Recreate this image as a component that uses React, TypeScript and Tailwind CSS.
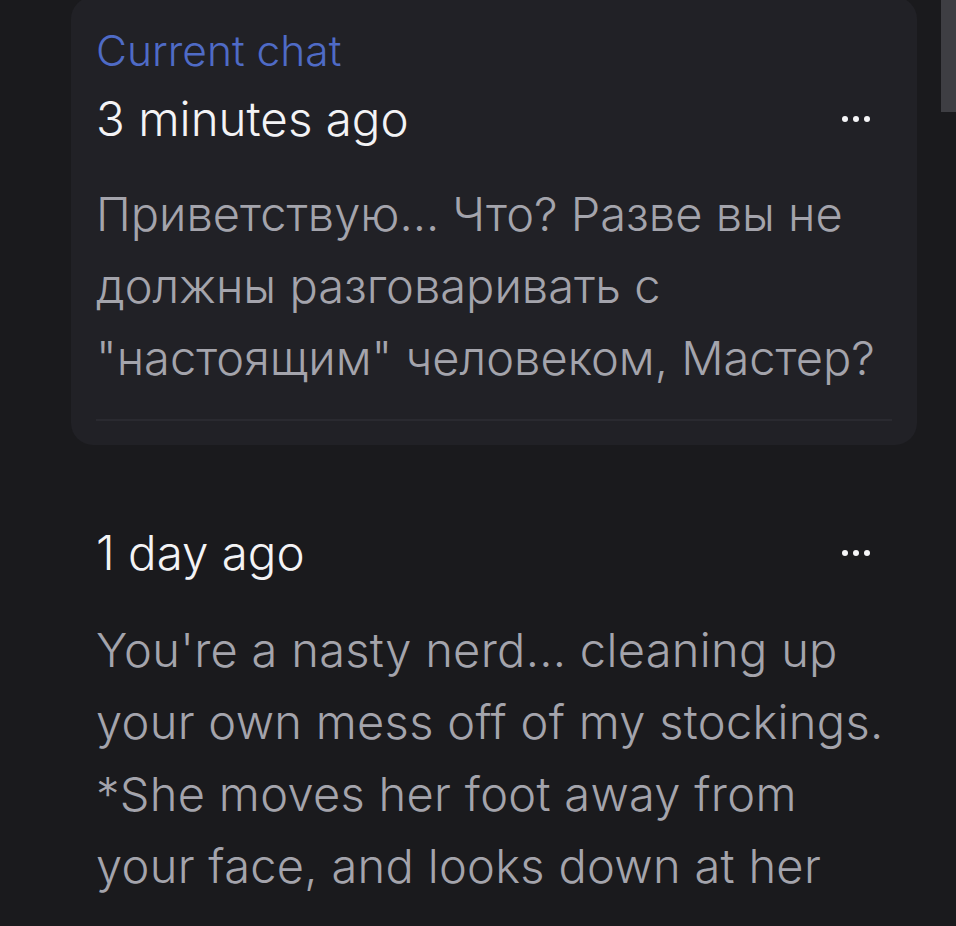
import React from "react";

function Dots() {
  return (
    <div className="flex items-center gap-[5px] mr-[22px]">
      <span className="block w-[6px] h-[6px] rounded-full bg-[#f5f5f7]" />
      <span className="block w-[6px] h-[6px] rounded-full bg-[#f5f5f7]" />
      <span className="block w-[6px] h-[6px] rounded-full bg-[#f5f5f7]" />
    </div>
  );
}

const bodyCls =
  "block whitespace-nowrap text-[47px] leading-[72px] font-light tracking-[0.3px] text-[#a4a4ac]";
const ruCls =
  "block whitespace-nowrap text-[47px] leading-[72px] font-light tracking-[0px] text-[#a4a4ac]";

export default function App() {
  return (
    <div
      className="w-[956px] h-[926px] overflow-hidden bg-[#1a1a1d] flex"
      style={{ fontFamily: "Inter, Roboto, 'Noto Sans', sans-serif" }}
    >
      <div className="ml-[71px] w-[846px] flex flex-col">
        <div className="-mt-[3px] rounded-[22px] bg-[#212126] px-[25px] pt-[30px] pb-[24px]">
          <div className="text-[42.5px] leading-[48px] font-light text-[#4f6bc6]">Current chat</div>
          <div className="mt-[16px] flex items-center justify-between">
            <span className="text-[47.5px] leading-[56px] font-light text-[#f3f3f5]">3 minutes ago</span>
            <Dots />
          </div>
          <div className="mt-[31px]">
            <span className={ruCls}>Приветствую... Что? Разве вы не</span>
            <span className={ruCls}>должны разговаривать с</span>
            <span className={ruCls}>"настоящим" человеком, Мастер?</span>
          </div>
          <div className="mt-[25px] h-[2px] bg-[#2a2a30]" />
        </div>
        <div className="px-[25px] mt-[80px]">
          <div className="flex items-center justify-between">
            <span className="text-[47.5px] leading-[56px] font-light text-[#f3f3f5]">1 day ago</span>
            <Dots />
          </div>
          <div className="mt-[33px]">
            <span className={bodyCls}>You're a nasty nerd... cleaning up</span>
            <span className={bodyCls}>your own mess off of my stockings.</span>
            <span className={bodyCls}>*She moves her foot away from</span>
            <span className={bodyCls}>your face, and looks down at her</span>
          </div>
        </div>
      </div>
      <div className="ml-[24px] w-[15px] h-[112px] bg-[#3e3e43]" />
    </div>
  );
}
